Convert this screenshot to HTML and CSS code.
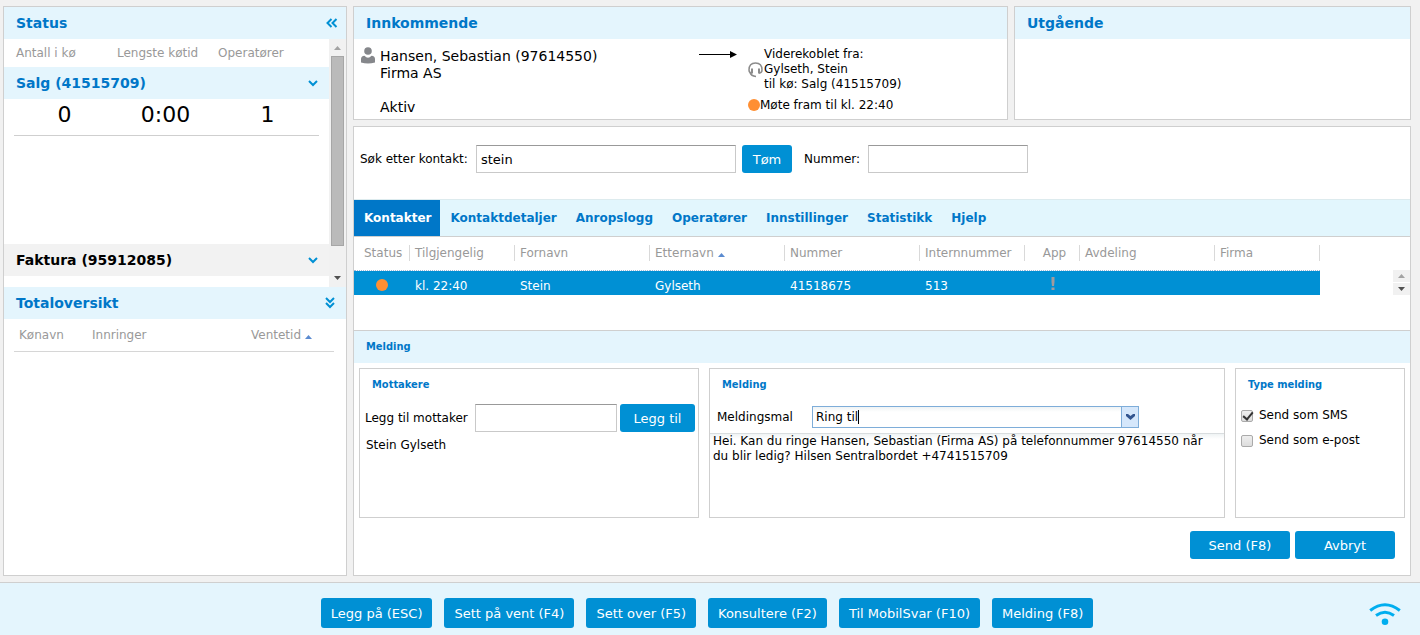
FILE: index.html
```html
<!DOCTYPE html>
<html lang="no">
<head>
<meta charset="utf-8">
<title>Sentralbord</title>
<link rel="stylesheet" href="styles.css">
</head>
<body>
<div class="workspace">
  <aside class="panel sidebar">
    <header class="bar">
      <h2 class="title">Status</h2>
      <button class="icon-button" type="button" aria-label="Skjul panel">
        <svg width="12" height="10" viewBox="0 0 12 10"><path d="M5.5 1 1.5 5l4 4M10.5 1l-4 4 4 4" class="stroke"/></svg>
      </button>
    </header>
    <div class="queues">
      <div class="queue-list">
        <div class="queue-columns"><span>Antall i kø</span><span>Lengste køtid</span><span>Operatører</span></div>
        <section class="queue queue-open">
          <header class="bar">
            <h3 class="title">Salg (41515709)</h3>
            <button class="icon-button" type="button" aria-label="Vis Salg"><svg width="10" height="7" viewBox="0 0 10 7"><path d="M1 1l4 4 4-4" class="stroke"/></svg></button>
          </header>
          <div class="queue-values"><span>0</span><span>0:00</span><span>1</span></div>
        </section>
        <section class="queue">
          <header class="bar bar-idle">
            <h3 class="title">Faktura (95912085)</h3>
            <button class="icon-button" type="button" aria-label="Vis Faktura"><svg width="10" height="7" viewBox="0 0 10 7"><path d="M1 1l4 4 4-4" class="stroke"/></svg></button>
          </header>
        </section>
      </div>
      <div class="scrollbar">
        <svg class="scroll-arrow" width="7" height="4" viewBox="0 0 7 4"><path d="M0 4h7L3.5 0z" fill="#a3a3a3"/></svg>
        <div class="thumb"></div>
        <svg class="scroll-arrow" width="7" height="4" viewBox="0 0 7 4"><path d="M0 0h7L3.5 4z" fill="#505050"/></svg>
      </div>
    </div>
    <header class="bar bar-total">
      <h2 class="title">Totaloversikt</h2>
      <button class="icon-button" type="button" aria-label="Vis totaloversikt">
        <svg width="10" height="12" viewBox="0 0 10 12"><path d="M1 1l4 4 4-4M1 6l4 4 4-4" class="stroke"/></svg>
      </button>
    </header>
    <table class="overview">
      <thead><tr><th class="col-queue">Kønavn</th><th>Innringer</th><th class="col-wait">Ventetid <svg class="sort" width="7" height="4" viewBox="0 0 7 4"><path d="M0 4h7L3.500 0z"/></svg></th></tr></thead>
    </table>
  </aside>

  <main class="main">
    <div class="calls">
      <section class="panel">
        <header class="bar"><h2 class="title">Innkommende</h2></header>
        <div class="call">
          <svg class="person" width="14" height="17" viewBox="0 0 14 17"><circle cx="7" cy="4" r="3.800"/><path d="M0 15.500V12q0-3 3.500-3.300Q7 12.800 10.500 8.700 14 9 14 12v3.500q-7 2-14 0z"/></svg>
          <div class="caller">
            <p>Hansen, Sebastian (97614550)</p>
            <p>Firma AS</p>
            <p class="call-state">Aktiv</p>
          </div>
          <svg class="arrow" width="38" height="9" viewBox="0 0 38 9"><path d="M0 4h32v1H0zM31 1l7 3.500L31 8z"/></svg>
          <div class="forward">
            <svg class="headset" width="15" height="16" viewBox="0 0 15 16"><path d="M4 11Q1 11 1 8 1 1 7.500 1T14 8Q14 11 11 11"/><path d="M4 6.500v5M11 6.500v5" class="ear"/><path d="M2 10.500Q3 14 8 14.500"/></svg>
            <p>Viderekoblet fra:<br>Gylseth, Stein<br>til kø: Salg (41515709)</p>
          </div>
          <div class="meeting"><span class="dot"></span>Møte fram til kl. 22:40</div>
        </div>
      </section>
      <section class="panel"><header class="bar"><h2 class="title">Utgående</h2></header></section>
    </div>

    <section class="panel contacts">
      <form class="search">
        <label class="contact-label" for="contact">Søk etter kontakt:</label>
        <input class="field field-contact" id="contact" type="text" value="stein">
        <button class="button" type="button">Tøm</button>
        <label class="number-label" for="number">Nummer:</label>
        <input class="field field-number" id="number" type="text">
      </form>
      <nav class="tabs">
        <a class="tab tab-active" href="#kontakter">Kontakter</a>
        <a class="tab" href="#detaljer">Kontaktdetaljer</a>
        <a class="tab" href="#anropslogg">Anropslogg</a>
        <a class="tab" href="#operatorer">Operatører</a>
        <a class="tab" href="#innstillinger">Innstillinger</a>
        <a class="tab" href="#statistikk">Statistikk</a>
        <a class="tab" href="#hjelp">Hjelp</a>
      </nav>
      <div class="grid">
        <table class="contact-table">
          <colgroup><col class="w-status"><col class="w-mid"><col class="w-wide"><col class="w-wide"><col class="w-wide"><col class="w-mid"><col class="w-app"><col class="w-wide"><col class="w-mid"></colgroup>
          <thead><tr>
            <th class="first"><span>Status</span></th><th><span>Tilgjengelig</span></th><th><span>Fornavn</span></th>
            <th><span>Etternavn <svg class="sort" width="7" height="4" viewBox="0 0 7 4"><path d="M0 4h7L3.500 0z"/></svg></span></th>
            <th><span>Nummer</span></th><th><span>Internnummer</span></th><th class="center"><span>App</span></th><th><span>Avdeling</span></th><th><span>Firma</span></th>
          </tr></thead>
          <tbody><tr>
            <td class="center"><span class="dot"></span></td><td>kl. 22:40</td><td>Stein</td><td>Gylseth</td><td>41518675</td><td>513</td>
            <td class="center"><svg class="alert" width="4" height="13" viewBox="0 0 4 13"><path d="M.5 0h3v5L3 9H1L.5 5zM.5 10.500h3v2.500h-3z"/></svg></td><td></td><td></td>
          </tr></tbody>
        </table>
        <div class="mini-scroll">
          <svg width="7" height="4" viewBox="0 0 7 4"><path d="M0 4h7L3.500 0z" fill="#a3a3a3"/></svg>
          <svg width="7" height="4" viewBox="0 0 7 4"><path d="M0 0h7L3.500 4z" fill="#505050"/></svg>
        </div>
      </div>

      <header class="bar bar-message"><h2 class="subtitle">Melding</h2></header>
      <form class="message">
        <div class="boxes">
          <section class="box">
            <h3 class="subtitle">Mottakere</h3>
            <div class="recipient">
              <label for="recipient">Legg til mottaker</label>
              <input class="field" id="recipient" type="text">
              <button class="button" type="button">Legg til</button>
            </div>
            <p class="recipient-name">Stein Gylseth</p>
          </section>
          <section class="box">
            <h3 class="subtitle">Melding</h3>
            <div class="template">
              <label for="template">Meldingsmal</label>
              <div class="combo">
                <input id="template" type="text" value="Ring til">
                <span class="caret"></span>
                <button type="button" aria-label="Velg mal"><svg width="9" height="6" viewBox="0 0 9 6"><path d="M0 0h2l2.500 2L7 0h2v2L4.500 6 0 2z" fill="#33558f"/></svg></button>
              </div>
            </div>
            <textarea class="text" aria-label="Meldingstekst">Hei. Kan du ringe Hansen, Sebastian (Firma AS) på telefonnummer 97614550 når du blir ledig? Hilsen Sentralbordet +4741515709</textarea>
          </section>
          <section class="box">
            <h3 class="subtitle">Type melding</h3>
            <label class="check"><input type="checkbox" checked>Send som SMS</label>
            <label class="check"><input type="checkbox">Send som e-post</label>
          </section>
        </div>
        <div class="actions">
          <button class="button" type="button">Send (F8)</button>
          <button class="button" type="button">Avbryt</button>
        </div>
      </form>
    </section>
  </main>
</div>

<footer class="footer">
  <div class="commands">
    <button class="button" type="button">Legg på (ESC)</button>
    <button class="button" type="button">Sett på vent (F4)</button>
    <button class="button" type="button">Sett over (F5)</button>
    <button class="button" type="button">Konsultere (F2)</button>
    <button class="button" type="button">Til MobilSvar (F10)</button>
    <button class="button" type="button">Melding (F8)</button>
  </div>
  <svg class="wifi" width="32" height="23" viewBox="0 0 32 23"><path d="M1.200 7.500Q16-4 30.800 7.500M7 12.500q9-6.500 18 0"/><circle cx="16" cy="18.800" r="3.300"/></svg>
</footer>
</body>
</html>
```

FILE: styles.css
```css
* { box-sizing: border-box; }
body {
  margin: 0;
  min-height: 100vh;
  display: flex;
  flex-direction: column;
  background: #f1f1f1;
  color: #000;
  font: 12px/15px "DejaVu Sans", sans-serif;
}
h2, h3, p { margin: 0; }
input, button, textarea { font: inherit; color: inherit; }
svg { flex: none; }

.workspace { flex: 1; display: flex; gap: 6px; padding: 6px 9px 6px 3px; }
.panel { background: #fff; border: 1px solid #cfcfcf; min-width: 0; }
.sidebar { flex: 0 0 344px; }
.main { flex: 1; min-width: 0; display: flex; flex-direction: column; gap: 6px; }

.bar {
  display: flex;
  align-items: center;
  justify-content: space-between;
  height: 32px;
  padding: 0 8px 0 12px;
  background: #e4f5fd;
}
.bar-total { padding-right: 11px; }
.title { font-size: 14px; line-height: 18px; color: #0077c8; }
.subtitle { font-family: "DejaVu Sans Condensed", "DejaVu Sans", sans-serif; font-size: 11px; line-height: 14px; color: #0077c8; }
.icon-button { display: flex; padding: 0; border: 0; background: none; }
.stroke { fill: none; stroke: #0090d4; stroke-width: 2; }

.queues { display: flex; height: 248px; }
.queue-list { flex: 1; }
.queue-columns, .queue-values { display: grid; grid-template-columns: 101px 101px 1fr; }
.queue-columns { height: 28px; padding: 7px 0 0 12px; color: #999; }
.queue-open { height: 177px; }
.queue .bar { padding-right: 11px; }
.bar-idle { background: #f2f2f2; }
.bar-idle .title { color: #000; }
.queue-values {
  height: 37px;
  margin: 0 10px;
  padding-top: 3px;
  border-bottom: 1px solid #cfcfcf;
  text-align: center;
  font-size: 22px;
  line-height: 26px;
}
.scrollbar {
  width: 17px;
  display: flex;
  flex-direction: column;
  align-items: center;
  padding: 7px 0;
  background: #f1f1f1;
}
.thumb { width: 13px; height: 190px; margin: 6px 0 auto; background: #bababa; border: 1px solid #a6a6a6; }

.overview { width: 320px; margin: 0 10px; border-collapse: separate; border-spacing: 0; color: #999; }
.overview th { height: 33px; padding: 0 5px; border-bottom: 1px solid #d6d6d6; font-weight: normal; text-align: left; }
.overview .col-queue { width: 73px; }
.overview .col-wait { width: 88px; }
.sort { fill: #5b8bd0; vertical-align: 0; }

.calls { display: grid; grid-template-columns: 1fr 397px; gap: 6px; height: 114px; }
.call {
  display: grid;
  grid-template-columns: 14px 300px 38px 1fr;
  column-gap: 5px;
  padding: 8px 6px 0 7px;
}
.person { fill: #85878b; }
.caller { grid-row: span 2; padding-top: 1px; font-size: 14px; line-height: 17px; }
.call-state { margin-top: 17px; }
.arrow { margin-left: 14px; margin-top: 3px; }
.forward { display: flex; align-items: center; gap: 1px; padding-left: 20px; }
.headset { fill: none; stroke: #8c8c8c; stroke-width: 1.5; }
.headset .ear { stroke-width: 2; }
.meeting { grid-column: 4; display: flex; align-items: center; height: 26px; padding-left: 20px; }
.dot { display: inline-block; width: 12px; height: 12px; border-radius: 50%; background: #ff8f33; }

.contacts { flex: 1; }
.search { display: flex; align-items: center; gap: 6px; height: 72px; padding: 0 6px 8px; }
.contact-label { width: 110px; }
.number-label { width: 58px; margin-left: 6px; }
.field {
  height: 28px;
  min-width: 0;
  padding: 0 4px;
  background: #fff;
  border: 1px solid #c9c9c9;
  border-top-color: #999;
  font-size: 13px;
}
.field-contact { width: 260px; }
.field-number { width: 160px; }
.button {
  height: 28px;
  padding: 0 8px;
  border: 0;
  border-radius: 3px;
  background: #0090d4;
  color: #fff;
  font-size: 13px;
  white-space: nowrap;
}
.search .button { width: 50px; }

.tabs { display: flex; height: 38px; background: #e2f6fd; border-top: 1px solid #ddebee; border-bottom: 1px solid #cfcfcf; }
.tab { display: flex; align-items: center; padding: 0 9px 0 10px; color: #0077c8; font-weight: bold; text-decoration: none; }
.tab-active { background: #0077c8; color: #fff; }

.grid { display: flex; justify-content: space-between; align-items: flex-start; height: 93px; }
.contact-table { width: 966px; table-layout: fixed; border-collapse: separate; border-spacing: 0; }
.w-status { width: 56px; }
.w-mid { width: 105px; }
.w-wide { width: 135px; }
.w-app { width: 55px; }
.contact-table th { height: 34px; padding: 0 0 1px; border-bottom: 1px dotted #9cb8d8; font-weight: normal; color: #999; text-align: left; }
.contact-table th span { display: block; padding-left: 5px; border-right: 1px solid #d9d9d9; line-height: 16px; }
.contact-table th.first span { padding-left: 10px; }
.contact-table .center, .contact-table .center span { text-align: center; }
.contact-table td { height: 24px; padding: 6px 5px 0; background: #0090d4; color: #fff; line-height: 18px; }
.contact-table td .dot { vertical-align: -1px; }
.alert { fill: #a29a9c; }
.mini-scroll { display: grid; gap: 1px; width: 17px; margin-top: 33px; }
.mini-scroll svg { width: 17px; height: 12px; padding: 4px 5px; background: #f1f1f1; }

.bar-message { height: 33px; border-top: 1px solid #cfcfcf; }
.message { padding: 5px; }
.boxes { display: grid; grid-template-columns: 340px 1fr 170px; gap: 10px; height: 150px; }
.box { min-width: 0; border: 1px solid #cfcfcf; display: flex; flex-direction: column; }
.box .subtitle { padding: 9px 12px 0; }
.recipient { display: flex; align-items: center; margin: 12px 3px 0 5px; }
.recipient label { width: 110px; }
.recipient .field { flex: 1; margin-right: 3px; }
.recipient .button { width: 75px; }
.recipient-name { padding: 6px; }
.template { display: flex; align-items: center; height: 32px; margin: 9px 7px 0; }
.template label { width: 95px; }
.combo { position: relative; display: flex; width: 327px; height: 22px; border: 1px solid #7eadd9; }
.combo input { flex: 1; min-width: 0; border: 0; padding: 0 3px; background: linear-gradient(#eff3f4, #fff 5px); }
.combo button { display: flex; align-items: center; justify-content: center; width: 17px; padding: 0; border: 0; border-left: 1px solid #7eadd9; background: #d5e7fb; }
.caret { position: absolute; left: 45px; top: 3px; width: 1px; height: 14px; background: #000; }
.text { flex: 1; width: 100%; padding: 0 3px; border: 0; border-top: 1px solid #d9dddf; outline: 0; resize: none; background: linear-gradient(#eff3f4, #fff 5px); }
.check { display: flex; align-items: center; gap: 6px; height: 25px; padding-left: 5px; }
.subtitle + .check { margin-top: 11px; }
.check input {
  appearance: none;
  width: 12px;
  height: 12px;
  margin: 0;
  border: 1px solid #aaa;
  border-radius: 2px;
  background: linear-gradient(#eee, #ddd);
}
.check input:checked::after { content: ""; display: block; width: 4px; height: 8px; margin: -1px 0 0 3px; border: solid #333; border-width: 0 2px 2px 0; transform: rotate(40deg); }
.actions { display: flex; justify-content: flex-end; gap: 5px; padding: 13px 10px 0; }
.actions .button { width: 100px; }

.footer {
  display: grid;
  grid-template-columns: 1fr auto 1fr;
  height: 53px;
  padding: 15px 19px 0 13px;
  background: #e4f5fd;
  border-top: 1px solid #cfcfcf;
}
.commands { grid-column: 2; display: flex; gap: 12px; }
.commands .button { height: 30px; padding: 0 10px; }
.wifi { justify-self: end; margin-top: 5px; fill: #00aeef; }
.wifi path { fill: none; stroke: #00aeef; stroke-width: 3; }
```
